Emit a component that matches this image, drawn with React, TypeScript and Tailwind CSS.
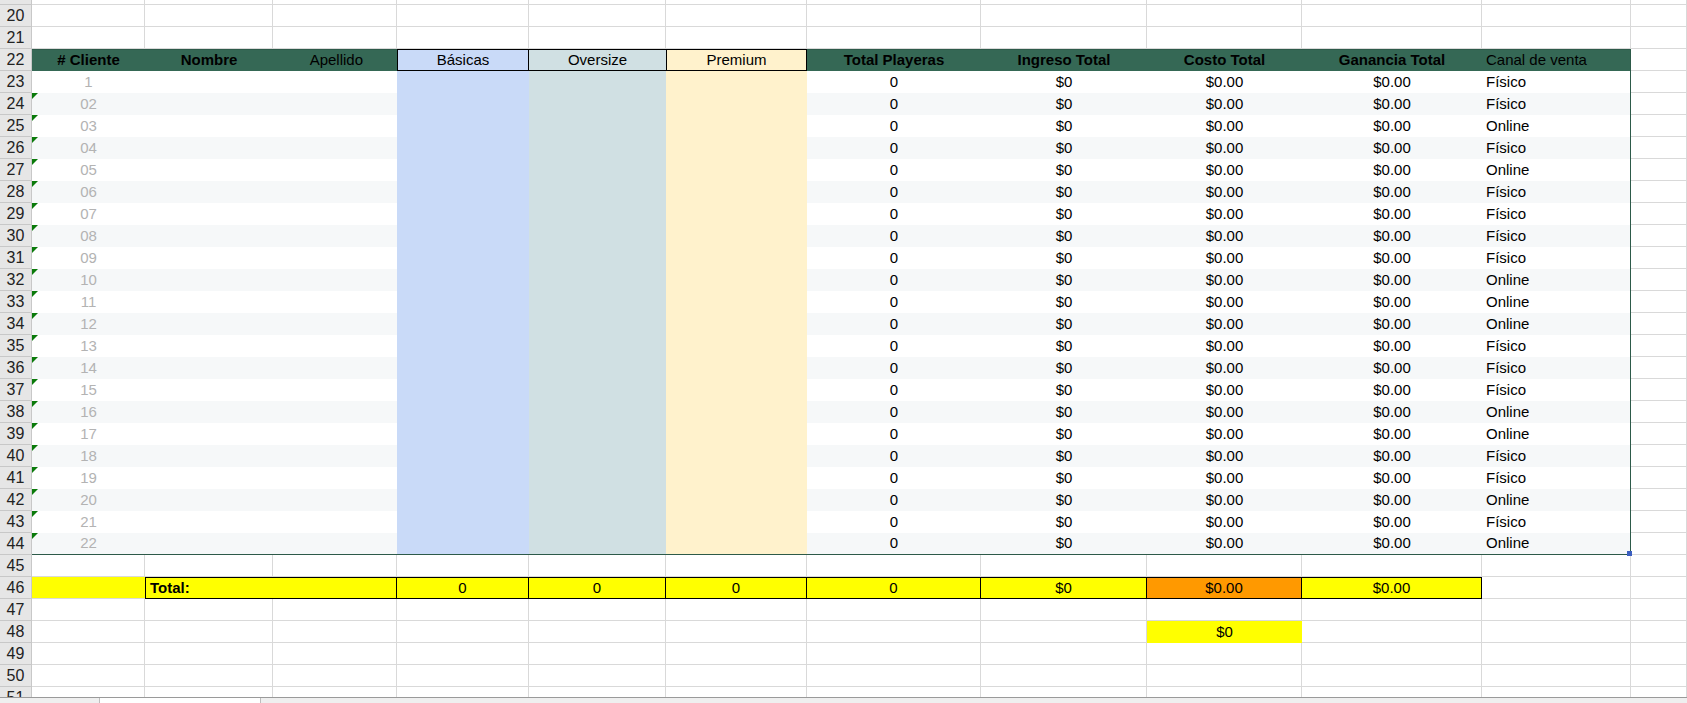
import React from "react";

const cols = "grid grid-cols-[32px_113px_128px_124px_132px_137px_141px_174px_166px_155px_180px_149px_1fr]";
const canal = ["Físico","Físico","Online","Físico","Online","Físico","Físico","Físico","Físico","Online","Online","Online","Físico","Físico","Físico","Online","Online","Físico","Físico","Online","Físico","Online"];

function RH({ n, h = "h-[22px]" }: { n: number | string; h?: string }) {
  return <div className={`${h} bg-[#e6e6e6] border-r border-b border-[#c8c8c8] flex items-center justify-center text-[16px] text-[#222] overflow-hidden`}>{n}</div>;
}
const G = "border-r border-b border-[#d9d9d9]";

function EmptyRow({ n, h = "h-[22px]" }: { n: number | string; h?: string }) {
  return (
    <div className={cols}>
      <RH n={n} h={h} />
      {Array.from({ length: 12 }).map((_, i) => <div key={i} className={`${h} ${G}`} />)}
    </div>
  );
}

export default function App() {
  return (
    <div className="relative h-[703px] w-[1687px] overflow-hidden bg-white text-[15px] text-black flex flex-col" style={{ fontFamily: '"Liberation Sans", Arial, sans-serif' }}>
      <EmptyRow n="" h="h-[5px]" />
      <EmptyRow n={20} />
      <EmptyRow n={21} />
      <div className={cols}>
        <RH n={22} />
        <div className="h-[22px] bg-[#356855] border-t border-[#2d5a49] flex items-center justify-center font-bold">{"# Cliente"}</div>
        <div className="h-[22px] bg-[#356855] border-t border-[#2d5a49] flex items-center justify-center font-bold">Nombre</div>
        <div className="h-[22px] bg-[#356855] border-t border-[#2d5a49] flex items-center justify-end pr-[34px]">Apellido</div>
        <div className="h-[22px] bg-[#c9daf8] border border-black flex items-center justify-center">Básicas</div>
        <div className="h-[22px] bg-[#d0e0e3] border-y border-black flex items-center justify-center">Oversize</div>
        <div className="h-[22px] bg-[#fff2cc] border border-black flex items-center justify-center">Premium</div>
        <div className="h-[22px] bg-[#356855] border-t border-[#2d5a49] flex items-center justify-center font-bold">Total Playeras</div>
        <div className="h-[22px] bg-[#356855] border-t border-[#2d5a49] flex items-center justify-center font-bold">Ingreso Total</div>
        <div className="h-[22px] bg-[#356855] border-t border-[#2d5a49] flex items-center justify-center font-bold">Costo Total</div>
        <div className="h-[22px] bg-[#356855] border-t border-[#2d5a49] flex items-center justify-center font-bold">Ganancia Total</div>
        <div className="h-[22px] bg-[#356855] border-t border-r border-[#2d5a49] flex items-center pl-[4px]">Canal de venta</div>
        <div className={`h-[22px] ${G}`} />
      </div>
      {canal.map((c, i) => {
        const bg = i % 2 === 0 ? "bg-white" : "bg-[#f6f8f9]";
        const last = i === canal.length - 1;
        const bb = last ? "border-b border-[#2d5a49]" : "";
        return (
          <div key={i} className={cols}>
            <RH n={23 + i} />
            <div className={`relative h-[22px] ${bg} ${bb} flex items-center justify-center text-[#b3b3b3]`}>
              {i > 0 && <span className="absolute left-0 top-0 w-0 h-0 border-t-[6px] border-r-[6px] border-t-[#0a7a0a] border-r-transparent" />}
              {i === 0 ? "1" : String(i + 1).padStart(2, "0")}
            </div>
            <div className={`h-[22px] ${bg} ${bb}`} />
            <div className={`h-[22px] ${bg} ${bb}`} />
            <div className={`h-[22px] bg-[#c9daf8] ${bb}`} />
            <div className={`h-[22px] bg-[#d0e0e3] ${bb}`} />
            <div className={`h-[22px] bg-[#fff2cc] ${bb}`} />
            <div className={`h-[22px] ${bg} ${bb} flex items-center justify-center`}>0</div>
            <div className={`h-[22px] ${bg} ${bb} flex items-center justify-center`}>$0</div>
            <div className={`h-[22px] ${bg} ${bb} flex items-center justify-center`}>$0.00</div>
            <div className={`h-[22px] ${bg} ${bb} flex items-center justify-center`}>$0.00</div>
            <div className={`relative h-[22px] ${bg} ${bb} border-r border-r-[#2d5a49] flex items-center pl-[4px]`}>
              {c}
              {last && <span className="absolute right-[-2px] bottom-[-2px] w-[5px] h-[5px] bg-[#3b5fc0]" />}
            </div>
            <div className={`h-[22px] ${G}`} />
          </div>
        );
      })}
      <EmptyRow n={45} />
      <div className={cols}>
        <RH n={46} />
        <div className="h-[22px] bg-[#ffff00] border-b border-[#d9d9d9]" />
        <div className="col-span-2 h-[22px] bg-[#ffff00] border border-black flex items-center pl-[4px] font-bold">Total:</div>
        <div className="h-[22px] bg-[#ffff00] border-y border-r border-black flex items-center justify-center">0</div>
        <div className="h-[22px] bg-[#ffff00] border-y border-r border-black flex items-center justify-center">0</div>
        <div className="h-[22px] bg-[#ffff00] border-y border-r border-black flex items-center justify-center">0</div>
        <div className="h-[22px] bg-[#ffff00] border-y border-r border-black flex items-center justify-center">0</div>
        <div className="h-[22px] bg-[#ffff00] border-y border-r border-black flex items-center justify-center">$0</div>
        <div className="h-[22px] bg-[#ff9900] border-y border-r border-black flex items-center justify-center">$0.00</div>
        <div className="h-[22px] bg-[#ffff00] border-y border-r border-black flex items-center justify-center">$0.00</div>
        <div className={`h-[22px] ${G}`} />
        <div className={`h-[22px] ${G}`} />
      </div>
      <EmptyRow n={47} />
      <div className={cols}>
        <RH n={48} />
        {Array.from({ length: 8 }).map((_, i) => <div key={i} className={`h-[22px] ${G}`} />)}
        <div className="h-[22px] bg-[#ffff00] flex items-center justify-center">$0</div>
        {Array.from({ length: 3 }).map((_, i) => <div key={i} className={`h-[22px] ${G}`} />)}
      </div>
      <EmptyRow n={49} />
      <EmptyRow n={50} />
      <EmptyRow n={51} />
      <div className="absolute top-[697px] left-0 w-[1687px] h-[6px] bg-[#efefef] border-t border-[#9a9a9a] flex">
        <div className="w-[100px] h-full border-r border-[#bdbdbd]" />
        <div className="w-[161px] h-full bg-white border-r border-[#bdbdbd]" />
      </div>
    </div>
  );
}
